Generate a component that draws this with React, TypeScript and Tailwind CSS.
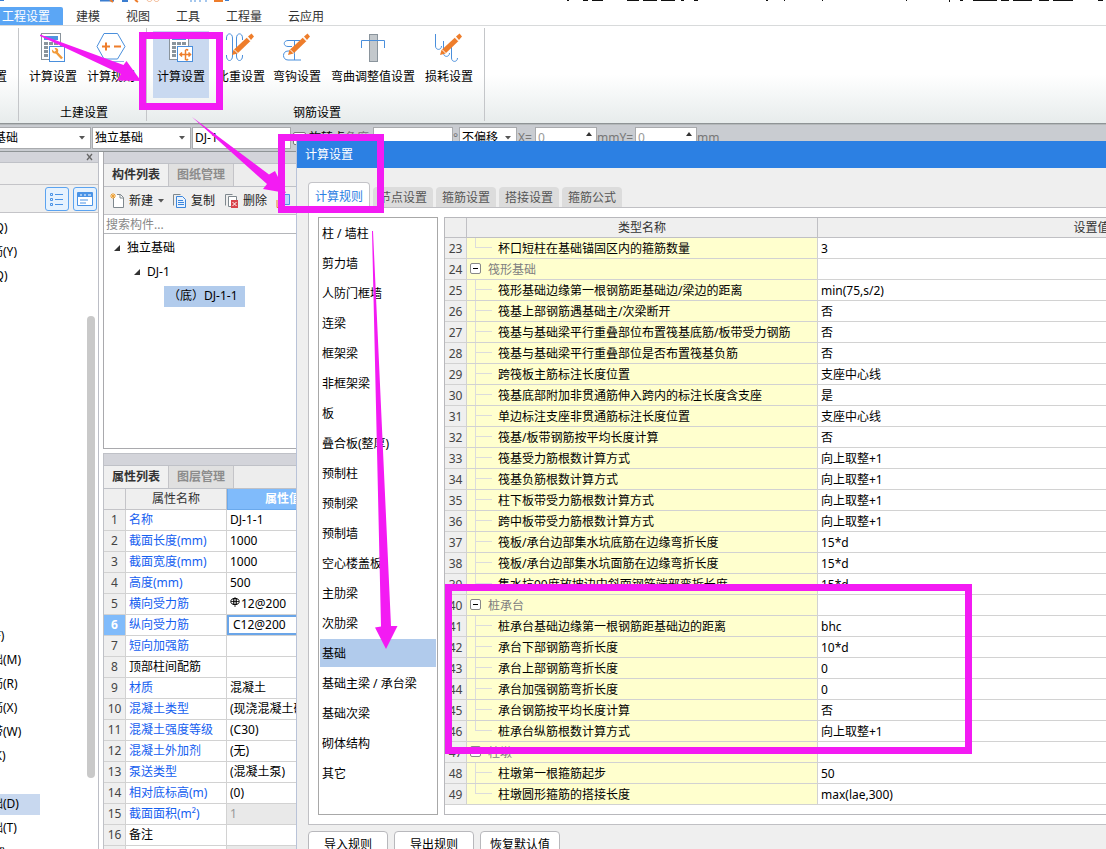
import React from "react";

const GRID_LINE = "border-[#d2d2d2]";

/* ---------- drawings ---------- */

function Pencil() {
  return (
    <g fill="#ee7d2b">
      <path d="M6 22l1.500-5L21 4.500l3.500 3.500L11.500 20.500z" />
      <path d="M22 3.500L25.500 0.500 28 3.500 25 7z" />
      <path d="M20.500 4l4 4" stroke="#fff" strokeWidth="1" />
      <path d="M8 16.500l4 4" stroke="#fff" strokeWidth="1" />
    </g>
  );
}

function Calc({ children }: { children: React.ReactNode }) {
  return (
    <svg width="30" height="30" viewBox="0 0 30 30" aria-hidden="true">
      <rect x="3.500" y="0.500" width="19" height="26" fill="#fff" stroke="#8a949c" />
      <rect x="6" y="3" width="14" height="4" fill="#4f93e0" />
      <g fill="#8a949c">
        <path d="M6 9h4v3H6zM11 9h4v3h-4zM16 9h4v3h-4zM6 13h4v3H6zM11 13h4v3h-4zM6 17h4v3H6zM6 21h4v3H6z" />
      </g>
      <rect x="11.500" y="13.500" width="15" height="15" fill="#fff" stroke="#4a8fdc" />
      {children}
    </svg>
  );
}

const icons: Record<string, React.ReactNode> = {
  calcWrench: (
    <Calc>
      <path d="M18 19l6 6.500" stroke="#f29a38" strokeWidth="2.500" />
      <path d="M14 16.500l2.500 2.200 1.500-1.200-1.500-2.500c3-.5 4.500 1.500 3.500 4l-2 1.500c-3 .5-4.500-1.500-4-4z" fill="#f29a38" />
    </Calc>
  ),
  hexagon: (
    <svg width="30" height="30" viewBox="0 0 30 30" fill="none" aria-hidden="true">
      <path d="M1 13.500L8 .5h13.500l7.500 13-7.500 12.500H8z" stroke="#4a8fdc" fill="#fff" />
      <path d="M7 28.500h21" stroke="#8fb7e6" />
      <path d="M6 13.500h8M10 9.500v8M18 13.500h7" stroke="#ee7d2b" strokeWidth="2" />
    </svg>
  ),
  calcMove: (
    <Calc>
      <path d="M14 21.500h10M19.500 17v10M16 19.500l-2 2 2 2M22.500 19.500l2 2-2 2M22 17.500c-1-1.500-2.500-1-2.500.5M22 26c-1 1.500-2.500 1-2.500-.5" stroke="#ee7d2b" strokeWidth="1.500" fill="none" />
    </Calc>
  ),
  density: (
    <svg width="30" height="30" viewBox="0 0 30 30" fill="none" aria-hidden="true">
      <path d="M.5 7V5c0-5.500 6-5.500 6 0v18c0 6-6 6-6 0v-1M16.500 7V5c0-5.500-6-5.500-6 0v18c0 6 6 6 6 0v-1" stroke="#4a8fdc" />
      <Pencil />
    </svg>
  ),
  hook: (
    <svg width="30" height="30" viewBox="0 0 30 30" fill="none" aria-hidden="true">
      <path d="M18 7.500H6c-5 0-5 6 0 6h4M9 18H6c-6 0-6 9 0 9h13M12.500 8v19" stroke="#4a8fdc" />
      <Pencil />
    </svg>
  ),
  bend: (
    <svg width="30" height="30" viewBox="0 0 30 30" fill="none" aria-hidden="true">
      <rect x="11.500" y="1.500" width="8" height="27" fill="#c3c8cc" stroke="#8a949c" />
      <path d="M3.500 15V7.500h23V15" stroke="#4a8fdc" />
    </svg>
  ),
  loss: (
    <svg width="30" height="30" viewBox="0 0 30 30" fill="none" aria-hidden="true">
      <path d="M1.500 1v12c0 4.500 6 4.500 6 0M9.500 8v12c0 4.500 6 4.500 6 0M17.500 14v11c0 4.500 6 4.500 6 0" stroke="#4a8fdc" />
      <Pencil />
    </svg>
  ),
};

function Annotations() {
  return (
    <svg className="pointer-events-none absolute left-0 top-0 z-20" width="1106" height="849" viewBox="0 0 1106 849" aria-hidden="true">
      <g fill="none" stroke="#f31bf3" strokeWidth="7">
        <rect x="142.500" y="35.500" width="77" height="71" />
        <rect x="281.500" y="137.500" width="99" height="72" />
        <rect x="448.500" y="587.500" width="520" height="163" />
      </g>
      <g fill="#f31bf3">
        <path d="M40 34.500L123.500 65l3-4L141 81l-24-.5 4-6.500L40 36z" />
        <path d="M192 117l77 57.500 6-3.500 11 22-23-4 4-5z" />
        <path d="M372 231h1l18 395h6.500L386 649l-11-21.500 6-1z" />
      </g>
    </svg>
  );
}

/* ---------- ribbon ---------- */

function RibbonButton({ icon, label, wide, active }: { icon: string; label: string; wide?: boolean; active?: boolean }) {
  return (
    <button className={`flex h-[67px] flex-col items-center pt-0.5 ${wide ? "w-24" : "w-14"} ${active ? "bg-[#c9d9f0]" : ""}`}>
      {icons[icon]}
      <span className="mt-[6px] whitespace-nowrap leading-4">{label}</span>
    </button>
  );
}

function RibbonGroup({ title, children }: { title: string; children: React.ReactNode }) {
  return (
    <div className="flex flex-col border-r border-[#c4c6c9] pt-[3px]">
      {children}
      <div className="mt-[7px] pl-[3px] text-center leading-4">{title}</div>
    </div>
  );
}

function Ribbon() {
  return (
    <div className="flex h-[98px] shrink-0 border-b border-[#8f9496] bg-[linear-gradient(#fff_50%,#e7ecec)] py-0.5">
      <div className="flex w-[19px] shrink-0 justify-end border-r border-[#c4c6c9] pr-[11px]">
        <span className="mt-[41px] whitespace-nowrap leading-4">设置</span>
      </div>
      <RibbonGroup title="土建设置">
        <div className="flex gap-0.5 pl-[6px] pr-[7px]">
          <RibbonButton icon="calcWrench" label="计算设置" />
          <RibbonButton icon="hexagon" label="计算规则" />
        </div>
      </RibbonGroup>
      <RibbonGroup title="钢筋设置">
        <div className="flex pl-[6px] pr-[7px]">
          <RibbonButton icon="calcMove" label="计算设置" active />
          <div className="w-1" />
          <RibbonButton icon="density" label="比重设置" />
          <RibbonButton icon="hook" label="弯钩设置" />
          <RibbonButton icon="bend" label="弯曲调整值设置" wide />
          <RibbonButton icon="loss" label="损耗设置" />
        </div>
      </RibbonGroup>
    </div>
  );
}

/* ---------- option bar ---------- */

function Combo({ label, value, width, arrow = true }: { label: string; value: string; width: string; arrow?: boolean }) {
  return (
    <div className={`relative flex h-[22px] shrink-0 border border-[#a9abae] bg-white ${width}`}>
      <select aria-label={label} className="w-full appearance-none bg-transparent pl-[2px] leading-5 outline-none" defaultValue={value}>
        <option>{value}</option>
      </select>
      {arrow && (
        <svg className="pointer-events-none absolute right-[5px] top-2" width="6" height="4" aria-hidden="true">
          <path d="M0 0h6L3 3.500z" fill="#555" />
        </svg>
      )}
    </div>
  );
}

function Spin({ label }: { label: string }) {
  return (
    <div className="relative flex h-[22px] w-[62px] shrink-0 border border-[#a9abae] bg-white">
      <input aria-label={label} defaultValue="0" className="w-full bg-transparent pl-0.5 text-[#999] outline-none" />
      <svg className="pointer-events-none absolute right-1 top-1" width="6" height="4" aria-hidden="true">
        <path d="M0 4h6L3 0z" fill="#333" />
      </svg>
    </div>
  );
}

function OptionBar() {
  return (
    <div className="flex h-[28px] shrink-0 items-center overflow-hidden border-b border-t border-b-[#8f9496] border-t-[#b4b8ba] bg-[#c9ccd1]">
      <div className="flex w-[91px] shrink-0 justify-end overflow-hidden">
        <Combo label="构件类型" value="基础" width="w-[100px]" />
      </div>
      <div className="flex shrink-0 items-center gap-px pl-px">
        <Combo label="构件" value="独立基础" width="w-[99px]" />
        <Combo label="图元" value="DJ-1" width="w-[99px]" arrow={false} />
      </div>
      <label className="ml-[2px] flex shrink-0 items-center gap-[3px]">
        <input type="checkbox" className="size-[13px] appearance-none rounded-xs border border-[#777] bg-white" />
        旋转点
      </label>
      <label className="flex shrink-0 items-center text-[#777]">
        角度
        <input defaultValue="0" className="ml-[4px] h-[22px] w-20 border border-[#a9abae] bg-white pl-[3px] text-black" />
      </label>
      <span className="w-[6px] shrink-0 text-[#777]">°</span>
      <Combo label="偏移" value="不偏移" width="w-[58px]" />
      <span className="w-[18px] shrink-0 pl-px text-[#777]">X=</span>
      <Spin label="X" />
      <span className="w-[38px] shrink-0 text-[#777]">mmY=</span>
      <Spin label="Y" />
      <span className="text-[#777]">mm</span>
    </div>
  );
}

/* ---------- left navigation ---------- */

const navItems = [
  "剪力墙(Q)", "砌体加筋(Y)", "保温墙(Q)", "", "", "", "", "", "", "", "", "", "", "", "", "", "",
  "基础梁(F)", "筏板基础(M)", "筏板主筋(R)", "筏板负筋(X)", "基础板带(W)", "集水坑(K)", "", "独立基础(D)", "条形基础(T)", "桩承台(V)",
];

function NavPanel() {
  return (
    <aside className="relative flex w-[99px] shrink-0 flex-col overflow-hidden border-r border-[#bcbec6] bg-white">
      <div className="flex h-[11px] shrink-0 items-center justify-end border-b border-[#bfc1c7] bg-[#d3d4da] pr-1">
        <button aria-label="关闭">
          <svg className="block" width="9" height="8" aria-hidden="true">
            <path d="M2 1l5 6M7 1L2 7" stroke="#666" strokeWidth="1.300" />
          </svg>
        </button>
      </div>
      <div className="h-[22px] shrink-0 border-b border-[#c4c4c8] bg-[#efefef]" />
      <div className="flex h-[28px] shrink-0 items-center justify-end gap-1 border-b border-[#c4c4c8] bg-[#efefef] pr-px">
        <button aria-label="列表视图" className="flex size-6 items-center justify-center rounded-[3px] border border-[#5ba3f0] bg-[#e6f2fe]">
          <svg width="14" height="14" fill="none" stroke="#4a93e6" aria-hidden="true">
            <path d="M5 2.500h8M5 7.500h8M5 12.500h8" />
            <path d="M.5 1.500h2v2h-2zM.5 6.500h2v2h-2zM.5 11.500h2v2h-2z" />
          </svg>
        </button>
        <button aria-label="面板视图" className="flex size-6 items-center justify-center rounded-[3px] border border-[#5ba3f0] bg-[#e6f2fe]">
          <svg width="16" height="14" fill="none" aria-hidden="true">
            <path d="M.5.500h15v13H.5z" fill="#fff" stroke="#4a93e6" />
            <path d="M1 3h14" stroke="#4a93e6" strokeWidth="4" />
            <path d="M3 3h2M7 3h2M11 3h3" stroke="#fff" />
            <path d="M3 8h8M3 11h6" stroke="#4a93e6" />
          </svg>
        </button>
      </div>
      <ul className="pt-[3px]">
        {navItems.map((t, i) => (
          <li key={i} className="flex h-6 items-center">
            <span className={`h-[21px] w-10 whitespace-nowrap leading-5 ${t === "独立基础(D)" ? "bg-[#c8d8ef]" : ""}`}>
              <span className="-ml-[45px]">{t}</span>
            </span>
          </li>
        ))}
      </ul>
      <div className="absolute right-[3px] top-[164px] h-[462px] w-2 rounded-full bg-[#c9c9c9]" />
    </aside>
  );
}

/* ---------- component list and property list ---------- */

function PanelTabs({ active, other }: { active: string; other: string }) {
  return (
    <div className="flex h-[23px] shrink-0 border-b border-[#bfc1c7] bg-[#ededed]">
      <button className="w-[65px] border-r border-[#c4c4c8] bg-[#f0f0f0] font-bold text-[#333]">{active}</button>
      <button className="w-[65px] border-r border-[#c4c4c8] bg-[#e0e0e0] font-bold text-[#8c8c8c]">{other}</button>
    </div>
  );
}

function TreeArrow() {
  return (
    <svg width="6" height="6" aria-hidden="true">
      <path d="M6 0v6H0z" fill="#333" />
    </svg>
  );
}

function ListPanel() {
  return (
    <section className="flex h-[297px] shrink-0 flex-col border-b border-l border-[#a9a9ad] bg-white">
      <div className="h-3 shrink-0 border-b border-[#bfc1c7] bg-[#d3d4da]" />
      <PanelTabs active="构件列表" other="图纸管理" />
      <div className="flex h-[28px] shrink-0 items-center border-b border-[#c4c4c8] bg-[#efefef] pl-[6px] text-[#222]">
        <button className="flex items-center gap-[5px]">
          <svg width="14" height="16" fill="none" aria-hidden="true">
            <path d="M3.500 4.500v10h10V4.500l-3-3H7" stroke="#7f888e" fill="#fff" />
            <path d="M10 1.500V5h3.500" stroke="#7f888e" />
            <path d="M0 3h6M3 0v6M1 1l4 4M5 1L1 5" stroke="#f0a030" />
          </svg>
          新建
        </button>
        <svg className="ml-[5px]" width="6" height="4" aria-hidden="true">
          <path d="M0 0h6L3 3.500z" fill="#555" />
        </svg>
        <button className="ml-[9px] flex items-center gap-[5px]">
          <svg width="13" height="16" fill="none" aria-hidden="true">
            <path d="M.5 12.500V1.500h7" stroke="#7f888e" />
            <path d="M3.500 3.500h6l3 3v8h-9z" fill="#e8f2fe" stroke="#3b86dc" />
            <path d="M5 7.500h5M5 9.500h6M5 11.500h6" stroke="#3b86dc" />
          </svg>
          复制
        </button>
        <button className="ml-[10px] flex items-center gap-[5px]">
          <svg width="13" height="16" fill="none" aria-hidden="true">
            <path d="M.5 12.500V1.500h7" stroke="#7f888e" />
            <path d="M3.500 3.500h8v10h-8z" fill="#fff" stroke="#7f888e" />
            <path d="M6 7h7v8H6z" fill="#d9434a" />
            <path d="M7.500 9l4 4M11.500 9l-4 4" stroke="#fff" />
          </svg>
          删除
        </button>
        <svg className="ml-[9px] shrink-0" width="16" height="16" fill="none" aria-hidden="true">
          <path d="M5.500 1.500h8v10h-8z" fill="#b9d8fb" stroke="#4a93e6" />
          <path d="M1 7v7.500h8" stroke="#ee7d2b" />
        </svg>
      </div>
      <input aria-label="搜索构件" placeholder="搜索构件..." className="h-[19px] shrink-0 border-b border-[#b4b6ba] px-0.5 placeholder:text-[#888]" />
      <ul className="pt-[2px]">
        <li className="flex h-6 items-center gap-[7px] pl-[10px]"><TreeArrow />独立基础</li>
        <li className="flex h-6 items-center gap-[7px] pl-[30px]"><TreeArrow />DJ-1</li>
        <li className="flex h-6 items-center pl-[60px]">
          <span className="h-[21px] w-[81px] bg-[#b1cbec] pl-1 leading-5">（底）DJ-1-1</span>
        </li>
      </ul>
    </section>
  );
}

function RebarMark() {
  return (
    <svg className="mr-px inline-block align-[1px]" width="10" height="10" fill="none" stroke="#000" aria-hidden="true">
      <ellipse cx="5" cy="4.500" rx="4.200" ry="3" />
      <path d="M3.500 1v7M6.500 1v7M5 0v10M1 4.500h8" strokeWidth=".8" />
    </svg>
  );
}

type Prop = { name: string; value: string; plain?: boolean; muted?: boolean };
const props: Prop[] = [
  { name: "名称", value: "DJ-1-1" },
  { name: "截面长度(mm)", value: "1000" },
  { name: "截面宽度(mm)", value: "1000" },
  { name: "高度(mm)", value: "500" },
  { name: "横向受力筋", value: "12@200" },
  { name: "纵向受力筋", value: "C12@200" },
  { name: "短向加强筋", value: "" },
  { name: "顶部柱间配筋", value: "", plain: true },
  { name: "材质", value: "混凝土" },
  { name: "混凝土类型", value: "(现浇混凝土碎石)" },
  { name: "混凝土强度等级", value: "(C30)" },
  { name: "混凝土外加剂", value: "(无)" },
  { name: "泵送类型", value: "(混凝土泵)" },
  { name: "相对底标高(m)", value: "(0)" },
  { name: "截面面积(m²)", value: "1", muted: true },
  { name: "备注", value: "", plain: true },
  { name: "", value: "", muted: true },
];

function PropertyPanel() {
  const cell = `border-b border-r ${GRID_LINE} p-0 leading-5 whitespace-nowrap`;
  return (
    <section className="mt-1 flex min-h-0 flex-1 flex-col overflow-hidden border-l border-t border-[#bfc1c7] bg-white">
      <div className="h-3 shrink-0 border-b border-[#bfc1c7] bg-[#d3d4da]" />
      <PanelTabs active="属性列表" other="图层管理" />
      <table className="w-[236px] table-fixed border-separate border-spacing-0">
        <colgroup>
          <col className="w-[22px]" />
          <col className="w-[101px]" />
          <col />
        </colgroup>
        <thead>
          <tr className="h-[21px]">
            <th className="border-b border-r border-[#c4c4c8] bg-[#efefef] p-0" aria-label="序号" />
            <th className="border-b border-r border-[#c4c4c8] bg-[#efefef] p-0 font-normal leading-5 text-[#333]">属性名称</th>
            <th className="border-b border-l border-[#6aa9ec] bg-[#80bbfb] p-0 pr-0.5 leading-5 text-white">属性值</th>
          </tr>
        </thead>
        <tbody>
          {props.map((p, i) => (
            <tr key={i} className="h-[21px]">
              <td className={`${cell} text-center ${i === 5 ? "bg-[#80bbfb] font-bold text-white" : "bg-[#efefef] text-[#444]"}`}>{p.name ? i + 1 : ""}</td>
              <td className={`${cell} pl-[3px] ${p.plain ? "text-black" : "text-[#1560f0]"}`}>{p.name}</td>
              <td className={`${cell} ${p.muted ? "bg-[#e9e9e9] text-[#999]" : ""} ${i === 5 ? "" : "pl-[3px]"}`}>
                {i === 5 ? (
                  <input aria-label={p.name} defaultValue={p.value} className="block h-5 w-full border-2 border-[#6aa5e8] pl-[4px] outline-none" />
                ) : (
                  <>
                    {i === 4 && <RebarMark />}
                    {p.value}
                  </>
                )}
              </td>
            </tr>
          ))}
        </tbody>
      </table>
    </section>
  );
}

/* ---------- settings dialog ---------- */

const categories = [
  "柱 / 墙柱", "剪力墙", "人防门框墙", "连梁", "框架梁", "非框架梁", "板", "叠合板(整厚)", "预制柱", "预制梁",
  "预制墙", "空心楼盖板", "主肋梁", "次肋梁", "基础", "基础主梁 / 承台梁", "基础次梁", "砌体结构", "其它",
];

type Rule = { n: number; name: string; value: string; kind?: "group" | "last" };
const rules: Rule[] = [
  { n: 23, name: "杯口短柱在基础锚固区内的箍筋数量", value: "3", kind: "last" },
  { n: 24, name: "筏形基础", value: "", kind: "group" },
  { n: 25, name: "筏形基础边缘第一根钢筋距基础边/梁边的距离", value: "min(75,s/2)" },
  { n: 26, name: "筏基上部钢筋遇基础主/次梁断开", value: "否" },
  { n: 27, name: "筏基与基础梁平行重叠部位布置筏基底筋/板带受力钢筋", value: "否" },
  { n: 28, name: "筏基与基础梁平行重叠部位是否布置筏基负筋", value: "否" },
  { n: 29, name: "跨筏板主筋标注长度位置", value: "支座中心线" },
  { n: 30, name: "筏基底部附加非贯通筋伸入跨内的标注长度含支座", value: "是" },
  { n: 31, name: "单边标注支座非贯通筋标注长度位置", value: "支座中心线" },
  { n: 32, name: "筏基/板带钢筋按平均长度计算", value: "否" },
  { n: 33, name: "筏基受力筋根数计算方式", value: "向上取整+1" },
  { n: 34, name: "筏基负筋根数计算方式", value: "向上取整+1" },
  { n: 35, name: "柱下板带受力筋根数计算方式", value: "向上取整+1" },
  { n: 36, name: "跨中板带受力筋根数计算方式", value: "向上取整+1" },
  { n: 37, name: "筏板/承台边部集水坑底筋在边缘弯折长度", value: "15*d" },
  { n: 38, name: "筏板/承台边部集水坑面筋在边缘弯折长度", value: "15*d" },
  { n: 39, name: "集水坑90度放坡边中斜面钢筋端部弯折长度", value: "15*d", kind: "last" },
  { n: 40, name: "桩承台", value: "", kind: "group" },
  { n: 41, name: "桩承台基础边缘第一根钢筋距基础边的距离", value: "bhc" },
  { n: 42, name: "承台下部钢筋弯折长度", value: "10*d" },
  { n: 43, name: "承台上部钢筋弯折长度", value: "0" },
  { n: 44, name: "承台加强钢筋弯折长度", value: "0" },
  { n: 45, name: "承台钢筋按平均长度计算", value: "否" },
  { n: 46, name: "桩承台纵筋根数计算方式", value: "向上取整+1", kind: "last" },
  { n: 47, name: "柱墩", value: "", kind: "group" },
  { n: 48, name: "柱墩第一根箍筋起步", value: "50" },
  { n: 49, name: "柱墩圆形箍筋的搭接长度", value: "max(lae,300)", kind: "last" },
];

function RuleName({ rule }: { rule: Rule }) {
  if (rule.kind === "group") {
    return (
      <div className="flex h-5 gap-[7px] pl-[3px] text-[#808080]">
        <button aria-label={`折叠${rule.name}`} className="mt-1 flex size-[11px] items-center justify-center rounded-xs border border-[#888] bg-white">
          <span className="h-px w-[5px] bg-black" />
        </button>
        <span className="pt-0.5 leading-[18px]">{rule.name}</span>
      </div>
    );
  }
  return (
    <div className="flex h-5 pl-2">
      <svg className="mr-[6px] shrink-0" width="17" height="20" stroke="#dcdcdc" aria-hidden="true">
        <path d={rule.kind === "last" ? "M.5 0v10M0 9.500h17" : "M.5 0v20M0 9.500h17"} />
      </svg>
      <span className="pt-0.5 leading-[18px]">{rule.name}</span>
    </div>
  );
}

function RuleTable() {
  const head = "border-b border-r border-[#c0c0c4] bg-[#efefef] p-0 font-normal leading-[19px] text-[#333]";
  const line = `border-b border-r ${GRID_LINE} p-0 whitespace-nowrap`;
  const text = "pt-0.5 leading-[18px]";
  return (
    <div className="min-w-0 flex-1 overflow-hidden border border-r-0 border-[#b8b8bc] bg-white">
      <table className="w-[921px] table-fixed border-separate border-spacing-0">
        <colgroup>
          <col className="w-[22px]" />
          <col className="w-[351px]" />
          <col />
        </colgroup>
        <thead>
          <tr>
            <th className={head} aria-label="序号" />
            <th className={head}>类型名称</th>
            <th className={head}>设置值</th>
          </tr>
        </thead>
        <tbody>
          {rules.map((r) => (
            <tr key={r.n}>
              <td className={`${line} ${text} bg-[#efefef] text-center text-[#444]`}>{r.n}</td>
              <td className={`${line} bg-[#ffffce]`}><RuleName rule={r} /></td>
              <td className={`${line} ${text} pl-[3px]`}>{r.value}</td>
            </tr>
          ))}
        </tbody>
      </table>
    </div>
  );
}

function SettingsDialog() {
  return (
    <div role="dialog" aria-label="计算设置" className="absolute bottom-0 left-[296px] right-0 top-[141px] z-10 flex flex-col overflow-hidden border-l border-[#b9c3d8] bg-[#efefef]">
      <h2 className="h-[27px] shrink-0 bg-[#2c80e3] pl-2 leading-[27px] text-white">计算设置</h2>
      <div className="relative z-10 flex h-[39px] shrink-0 items-end gap-[3px] pl-[11px]">
        <button className="-mb-px h-[26px] w-[62px] rounded-t-sm border border-b-0 border-[#c4c4c8] bg-white pt-0.5 text-[#2c80e3]">计算规则</button>
        {["节点设置", "箍筋设置", "搭接设置", "箍筋公式"].map((t) => (
          <button key={t} className="h-5 w-[60px] rounded-t-sm bg-[#dcdcdc] pt-0.5 text-[#555]">{t}</button>
        ))}
      </div>
      <div className="ml-[11px] flex h-[618px] shrink-0 gap-[6px] border border-r-0 border-[#c0c0c4] bg-white pt-[9px] pb-[9px] pl-[9px]">
        <ul className="w-[120px] shrink-0 border border-[#a8a8a8] px-px pt-px">
          {categories.map((c) => (
            <li key={c} className={`mb-0.5 flex h-7 items-center whitespace-nowrap pl-0.5 pt-0.5 ${c === "基础" ? "bg-[#b1cbec]" : ""}`}>{c}</li>
          ))}
        </ul>
        <RuleTable />
      </div>
      <div className="ml-[11px] mt-[6px] flex shrink-0 gap-[6px]">
        {["导入规则", "导出规则", "恢复默认值"].map((t) => (
          <button key={t} className="h-[26px] w-20 rounded-sm border border-[#b8b8bc] bg-white pt-0.5">{t}</button>
        ))}
      </div>
    </div>
  );
}

/* ---------- page ---------- */

export default function App() {
  return (
    <div className='relative flex h-screen flex-col overflow-hidden bg-white font-["Noto_Sans","Noto_Sans_CJK_SC",sans-serif] text-xs text-black'>
      <header className="h-[7px] shrink-0">
        <svg width="1106" height="7" aria-hidden="true">
          <path d="M0 0h4M100 .500h14M122 1h6" stroke="#3b7dd0" strokeWidth="2" />
          <path d="M110 0l3 2M135 0l3 2M215 0h7v1h-7z" stroke="#ee7d2b" strokeWidth="2" />
          <path d="M147 0c1 2 4 2 5 0M154 0c1 2 4 2 5 0" stroke="#f2b48c" fill="none" />
          <path d="M191 0v2M195 0v2M200 0v2M206 0v2" stroke="#4a8fdc" />
          <path d="M225 0h4" stroke="#3b7dd0" strokeWidth="2" />
          <path d="M567 .5h2M583 .5h5M592 .5h11M627 .5h12M643 .5h14M661 .5h14M681 .5h3M694 .5h4M766 .5h2M784 .5h1M822 .5h1M906 .5h1M949.500 0v2M960 .5h3M973 .5h24M1001 .5h8M1013 .5h19M1039 .5h10M1053 .5h20M1098 .5h5" stroke="#111" />
        </svg>
      </header>
      <nav className="flex h-[19px] shrink-0 border-b border-[#d8dadb] text-[#333]">
        <button className="w-[63px] rounded-tr-xs bg-[#5ba6f5] pl-0.5 pt-0.5 text-left text-white">工程设置</button>
        {["建模", "视图", "工具", "工程量", "云应用"].map((t) => (
          <button key={t} className="px-[13px] pt-0.5">{t}</button>
        ))}
      </nav>
      <Ribbon />
      <OptionBar />
      <main className="flex min-h-0 flex-1">
        <NavPanel />
        <div className="ml-1 flex min-w-0 flex-1 flex-col">
          <ListPanel />
          <PropertyPanel />
        </div>
      </main>
      <SettingsDialog />
      <Annotations />
    </div>
  );
}
